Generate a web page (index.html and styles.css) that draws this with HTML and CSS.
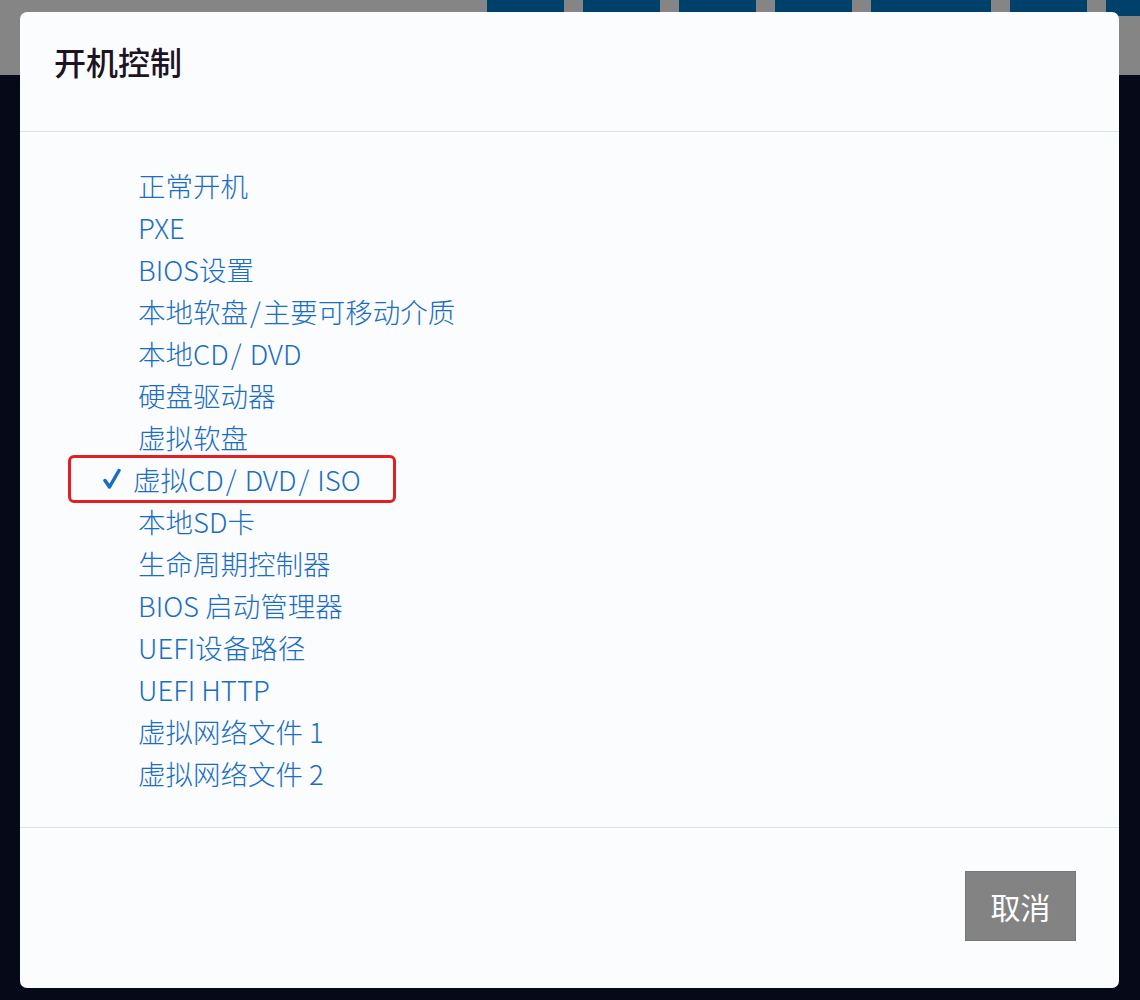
FILE: index.html
```html
<!DOCTYPE html>
<html lang="zh-CN">
<head>
    <meta charset="UTF-8">
    <meta name="viewport" content="width=device-width, initial-scale=1.0">
    <title>开机控制</title>
    <link rel="stylesheet" href="styles.css">
</head>
<body>
    <div class="topbar">
        <div class="tabs">
            <span class="tab"></span>
            <span class="tab"></span>
            <span class="tab"></span>
            <span class="tab"></span>
            <span class="tab wide"></span>
            <span class="tab"></span>
            <span class="tab last"></span>
        </div>
    </div>

    <div class="modal">
        <div class="modal-header">
            <h2>开机控制</h2>
        </div>

        <ul class="boot-list">
            <li>正常开机</li>
            <li>PXE</li>
            <li>BIOS设置</li>
            <li>本地软盘<span class="slash">/</span>主要可移动介质</li>
            <li>本地CD<span class="slash">/</span> DVD</li>
            <li>硬盘驱动器</li>
            <li>虚拟软盘</li>
            <li class="selected">
                <svg class="check" width="18" height="22" viewBox="0 0 18 22">
                    <path d="M2 12.5 L6.5 19 L16 2.5" fill="none" stroke="#1a6dc2" stroke-width="3.5" stroke-linecap="round" stroke-linejoin="round"/>
                </svg>
                <span>虚拟CD<span class="slash">/</span> DVD<span class="slash">/</span> ISO</span>
            </li>
            <li>本地SD卡</li>
            <li>生命周期控制器</li>
            <li>BIOS 启动管理器</li>
            <li>UEFI设备路径</li>
            <li>UEFI HTTP</li>
            <li>虚拟网络文件 1</li>
            <li>虚拟网络文件 2</li>
        </ul>

        <div class="modal-footer">
            <button type="button" class="button">取消</button>
        </div>
    </div>
</body>
</html>
```

FILE: styles.css
```css
body {
    font-family: "Noto Sans CJK SC", "Noto Sans", sans-serif;
    background-color: #060a18;
    margin: 0;
    padding: 0;
    height: 1000px;
    overflow: hidden;
    position: relative;
}
.topbar {
    height: 75px;
    background-color: #858585;
}
.tabs {
    display: flex;
    gap: 19px;
    padding-left: 487px;
}
.tab {
    width: 77px;
    height: 16px;
    background-color: #00416b;
}
.tab.wide {
    width: 120px;
}
.tab.last {
    flex: 1;
}
.modal {
    position: absolute;
    top: 12px;
    left: 20px;
    width: 1099px;
    height: 976px;
    background-color: #fbfcfe;
    border-radius: 7px;
    display: flex;
    flex-direction: column;
}
.modal-header {
    height: 120px;
    box-sizing: border-box;
    padding: 25px 34px 0;
    border-bottom: 1px solid #dce2ea;
}
.modal-header h2 {
    margin: 0;
    font-size: 32px;
    font-weight: 500;
    line-height: 48px;
    color: #1c1424;
}
.boot-list {
    list-style: none;
    margin: 0;
    padding: 32px 0 33px 118px;
    border-bottom: 1px solid #dce2ea;
}
.boot-list li {
    height: 42px;
    line-height: 42px;
    font-size: 27.5px;
    font-weight: 300;
    color: #1a6dc2;
    white-space: nowrap;
}
.slash {
    padding: 0 2px;
}
.boot-list li.selected {
    display: flex;
    align-items: center;
    gap: 12px;
    width: 328px;
    height: 48px;
    box-sizing: border-box;
    margin: -3px 0 -3px -70px;
    padding-left: 32px;
    border: 3px solid #e41e22;
    border-radius: 6px;
}
.check {
    flex: none;
}
.modal-footer {
    flex: 1;
    display: flex;
    justify-content: flex-end;
    align-items: flex-start;
    padding: 43px 43px 0 0;
}
.button {
    width: 111px;
    height: 70px;
    background-color: #838383;
    border: 1px solid #777;
    color: #ffffff;
    font-family: "Noto Sans CJK SC", sans-serif;
    font-size: 30px;
    padding: 0;
    cursor: pointer;
}
```
